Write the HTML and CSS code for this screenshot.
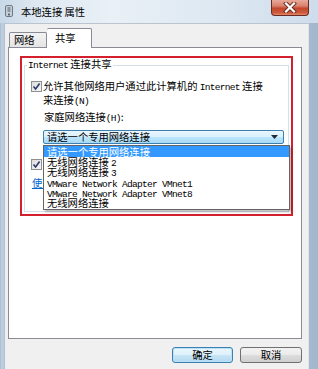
FILE: index.html
```html
<!DOCTYPE html>
<html lang="zh-CN">
<head>
<meta charset="utf-8">
<title>本地连接 属性</title>
<link rel="stylesheet" href="styles.css">
</head>
<body>
<div class="window">
  <div class="titlebar">
    <svg class="app-icon" width="8" height="12" viewBox="0 0 8 12">
      <rect x="0.5" y="0.5" width="7" height="11" rx="1.5" fill="#c9d0d8" stroke="#6d7884"/>
      <rect x="2.5" y="2" width="3" height="5" fill="#8a96a4"/>
      <rect x="3" y="8.5" width="2" height="2" fill="#5b6a7a"/>
    </svg>
    <span class="title">本地连接 属性</span>
    <div class="close">
      <svg width="14" height="11" viewBox="0 0 14 11">
        <path d="M3 1.5 L11 9.5 M11 1.5 L3 9.5" stroke="#6b2a1e" stroke-width="4" stroke-linecap="square"/>
        <path d="M3 1.5 L11 9.5 M11 1.5 L3 9.5" stroke="#ffffff" stroke-width="2.2" stroke-linecap="square"/>
      </svg>
    </div>
  </div>
  <div class="client">
    <div class="tabs">
      <div class="tab">网络</div>
      <div class="tab active">共享</div>
    </div>
    <div class="panel">
      <div class="highlight">
        <fieldset class="group">
          <legend><span class="lat">Internet</span> 连接共享</legend>
          <div class="check-row first">
            <span class="cb"><svg width="9" height="9" viewBox="0 0 9 9"><path d="M1.5 4.5 L3.6 7 L7.6 1.5" fill="none" stroke="#2b3a6b" stroke-width="1.6"/></svg></span>
            <div class="label">允许其他网络用户通过此计算机的 <span class="lat">Internet</span> 连接<br>来连接<span class="lat">(N)</span></div>
          </div>
          <div class="home-label">家庭网络连接<span class="lat">(H)</span>:</div>
          <div class="combo-wrap">
            <div class="combo">
              <span>请选一个专用网络连接</span>
              <svg width="7" height="4" viewBox="0 0 7 4"><path d="M0 0 H7 L3.5 4 Z" fill="#1d2a3a"/></svg>
            </div>
            <ul class="dropdown">
              <li class="sel">请选一个专用网络连接</li>
              <li>无线网络连接 <span class="lat">2</span></li>
              <li>无线网络连接 <span class="lat">3</span></li>
              <li><span class="lat">VMware Network Adapter VMnet1</span></li>
              <li><span class="lat">VMware Network Adapter VMnet8</span></li>
              <li>无线网络连接</li>
            </ul>
          </div>
          <div class="check-row second">
            <span class="cb"><svg width="9" height="9" viewBox="0 0 9 9"><path d="M1.5 4.5 L3.6 7 L7.6 1.5" fill="none" stroke="#2b3a6b" stroke-width="1.6"/></svg></span>
            <div class="label">允许其他网络用户控制或禁用共享的 <span class="lat">Internet</span> 连接<span class="lat">(O)</span></div>
          </div>
          <a class="link" href="#">使用 <span class="lat">ICS (Internet</span> 连接共享<span class="lat">)</span></a>
        </fieldset>
      </div>
    </div>
    <div class="buttons">
      <button class="btn default">确定</button>
      <button class="btn">取消</button>
    </div>
  </div>
</div>
</body>
</html>
```

FILE: styles.css
```css
html, body {
  margin: 0;
  padding: 0;
}
body {
  width: 318px;
  height: 369px;
  overflow: hidden;
  font-family: "Noto Sans CJK SC", "Noto Sans", sans-serif;
  font-size: 10.3px;
  color: #000;
}
.window {
  width: 318px;
  height: 369px;
  display: flex;
  flex-direction: column;
  background: linear-gradient(to right, #a9bbcf 0, #c3d3e3 2px, #aebfd2 5px, #d7e3ee 50%, #a3b7cc 100%);
  box-sizing: border-box;
}
.titlebar {
  height: 23px;
  flex: none;
  display: flex;
  align-items: center;
  position: relative;
  padding-left: 5px;
  background: linear-gradient(to right, #c8d8e8 0, #dfe9f2 12%, #e9f0f6 35%, #dde8f2 70%, #cfdceb 100%);
}
.app-icon {
  flex: none;
  margin-top: -1px;
}
.title {
  margin-left: 8px;
  line-height: 12px;
  margin-top: 1px;
  color: #000;
}
.close {
  position: absolute;
  left: 271px;
  top: 0;
  width: 38px;
  height: 16px;
  box-sizing: border-box;
  border: 1px solid #6a2b22;
  border-top: none;
  border-radius: 0 0 4px 4px;
  background: linear-gradient(to bottom, #e9a99b 0, #d9816d 40%, #c2472d 55%, #cf5a3e 85%, #e38a6a 100%);
  display: flex;
  align-items: center;
  justify-content: center;
}
.client {
  flex: 1;
  margin: 0 9px 0 5px;
  background: #f0f0f0;
  border-top: 1px solid #b9c4cf;
  border-right: 1px solid #dfe4ea;
  padding: 5px 6px 0 3px;
  display: flex;
  flex-direction: column;
}
.tabs {
  display: flex;
  align-items: flex-end;
  padding-left: 1px;
  height: 18px;
  position: relative;
  z-index: 2;
}
.tab {
  height: 15px;
  box-sizing: border-box;
  width: 38px;
  border: 1px solid #898c95;
  border-bottom: none;
  background: linear-gradient(to bottom, #f3f3f3, #e4e4e4);
  line-height: 14px;
  padding-left: 4px;
  border-radius: 2px 2px 0 0;
}
.tab.active {
  width: 45px;
  height: 20px;
  margin-bottom: -1px;
  margin-left: 0;
  border-left: none;
  background: #fff;
  line-height: 17px;
  padding-left: 8px;
}
.panel {
  height: 292px;
  box-sizing: border-box;
  background: #fff;
  border: 1px solid #898c95;
  padding: 8px 8px 0 11px;
}
.highlight {
  height: 160px;
  box-sizing: border-box;
  border: 2px solid #d3202c;
  padding: 0 2px 2px 2px;
  display: flex;
}
.group {
  flex: 1;
  margin: 0;
  min-width: 0;
  border: 1px solid #d5dfe5;
  padding: 0 0 0 6px;
}
.group legend {
  margin-left: -4px;
  padding: 0 1px;
  line-height: 12px;
}
.lat {
  font-family: "Liberation Mono", "DejaVu Sans Mono", monospace;
  font-size: 9.5px;
  letter-spacing: -0.7px;
}
.check-row {
  display: flex;
  align-items: flex-start;
  gap: 1px;
}
.check-row.first {
  margin-top: 8px;
}
.check-row.second {
  margin-top: 14px;
}
.cb {
  flex: none;
  width: 11px;
  height: 11px;
  box-sizing: border-box;
  border: 1px solid #8f8f8f;
  background: linear-gradient(135deg, #dcdcdc, #f8f8f8);
  display: flex;
  align-items: center;
  justify-content: center;
  margin-top: 1px;
}
.label {
  line-height: 12px;
}
.home-label {
  margin: 3px 0 0 13px;
  line-height: 12px;
}
.combo-wrap {
  position: relative;
  margin: 5px 4px 0 12px;
}
.combo {
  height: 14px;
  box-sizing: border-box;
  border: 1px solid #3c7fb1;
  border-radius: 2px;
  background: linear-gradient(to bottom, #eaf6fd 0, #d9f0fc 50%, #bee6fd 50%, #a7d9f5 100%);
  display: flex;
  align-items: center;
  justify-content: space-between;
  padding: 0 5px 0 3px;
  line-height: 12px;
}
.dropdown {
  position: absolute;
  top: 100%;
  left: 0;
  width: 245px;
  margin: 1px 0 0;
  padding: 0;
  list-style: none;
  background: #fff;
  border: 1px solid #646464;
  box-shadow: 2px 2px 2px rgba(0, 0, 0, 0.25);
  z-index: 5;
}
.dropdown li {
  height: 10.35px;
  line-height: 10.35px;
  padding-left: 3px;
  white-space: nowrap;
}
.dropdown li.sel {
  height: 11px;
  line-height: 11px;
  background: #3399ff;
  color: #fff;
}
.link {
  display: block;
  margin: 5px 0 0 1px;
  color: #0066cc;
  line-height: 12px;
  text-decoration: underline;
}
.buttons {
  display: flex;
  justify-content: flex-end;
  gap: 7px;
  margin-top: 8px;
}
.btn {
  height: 16px;
  width: 62px;
  box-sizing: border-box;
  padding: 0;
  font-family: "Noto Sans CJK SC", sans-serif;
  font-size: 10.3px;
  line-height: 12px;
  border: 1px solid #707070;
  border-radius: 3px;
  background: linear-gradient(to bottom, #f2f2f2 0, #ebebeb 50%, #dddddd 50%, #cfcfcf 100%);
  color: #000;
}
.btn.default {
  width: 61px;
  border-color: #3c7fb1;
  box-shadow: inset 0 0 0 1px #b9e2f8;
  background: linear-gradient(to bottom, #eaf6fd 0, #dff1fb 50%, #c8e6f6 50%, #b4daf0 100%);
}
```
